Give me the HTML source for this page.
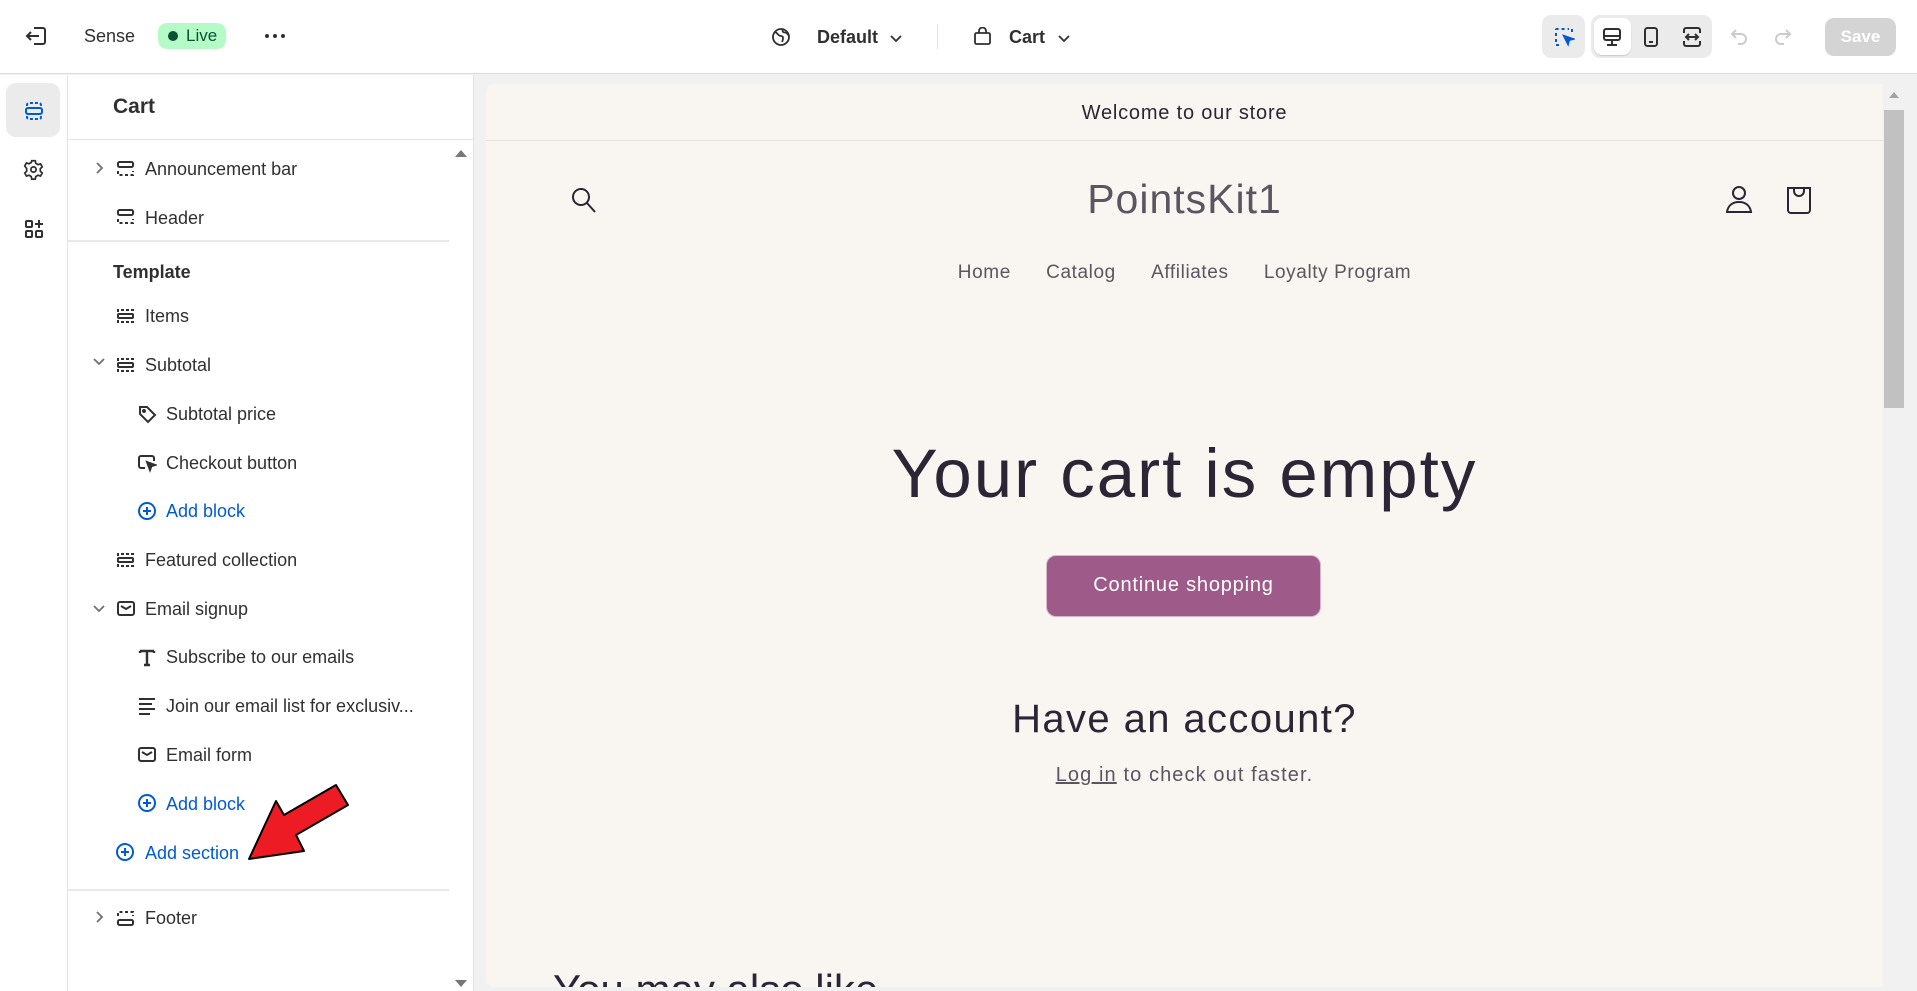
<!DOCTYPE html>
<html><head><meta charset="utf-8"><style>
*{box-sizing:border-box;margin:0;padding:0}
body{width:1917px;height:991px;overflow:hidden;background:#f1f1f1;font-family:"Liberation Sans",sans-serif;color:#303030;position:relative}
.abs{position:absolute}
.top{left:0;top:0;width:1917px;height:74px;background:#fff;border-bottom:1px solid #dcdcdc}
.rail{left:0;top:75px;width:68px;height:916px;background:#fff;border-right:1px solid #e3e3e3}
.side{left:68px;top:75px;width:406px;height:916px;background:#fff;border-right:1px solid #e3e3e3}
.row{position:absolute;font-size:18px;color:#303030;line-height:20px}
.blue{color:#005bd3}
svg{display:block}
.prev{left:486px;top:84px;width:1397px;height:903px;background:#f9f6f2;border-radius:8px 0 0 8px;overflow:hidden}
.sb{left:1883px;top:84px;width:22px;height:907px;background:#f1f1f1}
.pt{font-family:"Liberation Sans",sans-serif;color:#2b2535;position:absolute;text-align:center;white-space:nowrap}
</style></head><body>
<div class="abs top">
 <svg class="abs" style="left:25px;top:26px" width="22" height="20" viewBox="0 0 22 20" fill="none" stroke="#303030" stroke-width="2"><path d="M9 2h9a2 2 0 0 1 2 2v12a2 2 0 0 1-2 2H9"/><path d="M14 10H2M6 6l-4 4 4 4"/></svg>
 <div class="abs" style="left:84px;top:26px;font-size:18px">Sense</div>
 <div class="abs" style="left:158px;top:23px;width:68px;height:26px;border-radius:9px;background:#b4fbc8;font-size:17px;color:#0c5132;padding-left:28px;line-height:26px">Live<span class="abs" style="left:10px;top:8px;width:10px;height:10px;border-radius:5px;background:#0c5132"></span></div>
 <div class="abs" style="left:265px;top:34px;width:20px;height:4px">
  <span class="abs" style="left:0;width:4px;height:4px;border-radius:2px;background:#303030"></span><span class="abs" style="left:8px;width:4px;height:4px;border-radius:2px;background:#303030"></span><span class="abs" style="left:16px;width:4px;height:4px;border-radius:2px;background:#303030"></span></div>
 <svg class="abs" style="left:771px;top:27px" width="20" height="20" viewBox="0 0 20 20" fill="none" stroke="#303030" stroke-width="1.8"><circle cx="10" cy="10" r="8"/><path d="M4 5c3 1 3 4 6 4s2 4 1 6M12 2.5c-1 2 0 3 2 3s3 2 3 3"/></svg>
 <div class="abs" style="left:817px;top:27px;font-size:18px;font-weight:bold">Default</div>
 <svg class="abs" style="left:889px;top:34px" width="14" height="9" viewBox="0 0 14 9" fill="none" stroke="#303030" stroke-width="1.8"><path d="M2 2l5 5 5-5"/></svg>
 <div class="abs" style="left:937px;top:24px;width:1px;height:25px;background:#e3e3e3"></div>
 <svg class="abs" style="left:973px;top:27px" width="19" height="19" viewBox="0 0 19 19" fill="none" stroke="#303030" stroke-width="1.8"><rect x="2" y="6" width="15" height="11" rx="1.5"/><path d="M6 6V4a3.5 3.5 0 0 1 7 0v2"/></svg>
 <div class="abs" style="left:1009px;top:27px;font-size:18px;font-weight:bold">Cart</div>
 <svg class="abs" style="left:1057px;top:34px" width="14" height="9" viewBox="0 0 14 9" fill="none" stroke="#303030" stroke-width="1.8"><path d="M2 2l5 5 5-5"/></svg>
 <div class="abs" style="left:1542px;top:15px;width:43px;height:43px;border-radius:9px;background:#ebebeb"></div>
 <svg class="abs" style="left:1553px;top:26px" width="22" height="22" viewBox="0 0 22 22" fill="none" stroke="#005bd3" stroke-width="2" stroke-dasharray="3 3"><path d="M3 16V4a1 1 0 0 1 1-1h12"/><path d="M3 19h5"/><path d="M19 3v5"/><path d="M11 10l9 3-4 1-1 4z" fill="#005bd3" stroke-dasharray="none"/></svg>
 <div class="abs" style="left:1591px;top:15px;width:121px;height:43px;border-radius:9px;background:#ebebeb"></div>
 <div class="abs" style="left:1594px;top:18px;width:37px;height:37px;border-radius:8px;background:#fff;box-shadow:0 1px 1px rgba(0,0,0,.15)"></div>
 <svg class="abs" style="left:1601px;top:27px" width="22" height="20" viewBox="0 0 22 20" fill="none" stroke="#303030" stroke-width="2"><rect x="3" y="2" width="16" height="11" rx="2"/><path d="M3 9h16M11 13v4M6 18h10"/></svg>
 <svg class="abs" style="left:1643px;top:26px" width="16" height="22" viewBox="0 0 16 22" fill="none" stroke="#303030" stroke-width="2"><rect x="2" y="2" width="12" height="18" rx="2.5"/><path d="M6 16h4"/></svg>
 <svg class="abs" style="left:1681px;top:26px" width="22" height="22" viewBox="0 0 22 22" fill="none" stroke="#303030" stroke-width="2"><path d="M3 7V4a2 2 0 0 1 2-2h12a2 2 0 0 1 2 2v3M3 15v3a2 2 0 0 0 2 2h12a2 2 0 0 0 2-2v-3M5 11h12M8 8l-3 3 3 3M14 8l3 3-3 3"/></svg>
 <svg class="abs" style="left:1730px;top:27px" width="18" height="18" viewBox="0 0 18 18" fill="none" stroke="#cccccc" stroke-width="2"><path d="M6 3L2 7l4 4"/><path d="M2 7h9a5 5 0 0 1 0 10H8"/></svg>
 <svg class="abs" style="left:1774px;top:27px" width="18" height="18" viewBox="0 0 18 18" fill="none" stroke="#cccccc" stroke-width="2"><path d="M12 3l4 4-4 4"/><path d="M16 7H7a5 5 0 0 0 0 10h3"/></svg>
 <div class="abs" style="left:1825px;top:18px;width:71px;height:38px;border-radius:9px;background:#d4d4d4;color:#fff;font-weight:bold;font-size:17px;text-align:center;line-height:38px">Save</div>
</div>

<div class="abs rail">
 <div class="abs" style="left:6px;top:8px;width:54px;height:54px;border-radius:10px;background:#ebebeb"></div>
 <svg class="abs" style="left:24px;top:26px" width="20" height="20" viewBox="0 0 20 20" fill="none" stroke="#005bd3" stroke-width="2"><path d="M3 5V4a2 2 0 0 1 2-2h10a2 2 0 0 1 2 2v1M3 15v1a2 2 0 0 0 2 2h10a2 2 0 0 0 2-2v-1" stroke-dasharray="3 2"/><rect x="2" y="7" width="16" height="6" rx="2"/></svg>
 <svg class="abs" style="left:23px;top:84px" width="21" height="21" viewBox="0 0 24 24" fill="none" stroke="#303030" stroke-width="2"><circle cx="12" cy="12" r="3"/><path d="M10 2h4l.6 3 2.6 1.5 2.8-1 2 3.5-2.2 2v3l2.2 2-2 3.5-2.8-1-2.6 1.5-.6 3h-4l-.6-3-2.6-1.5-2.8 1-2-3.5 2.2-2v-3L2 8l2-3.5 2.8 1 2.6-1.5z"/></svg>
 <svg class="abs" style="left:24px;top:144px" width="20" height="20" viewBox="0 0 20 20" fill="none" stroke="#303030" stroke-width="2"><rect x="2" y="2" width="6" height="6" rx="1"/><rect x="2" y="12" width="6" height="6" rx="1"/><rect x="12" y="12" width="6" height="6" rx="1"/><path d="M15 1v8M11 5h8"/></svg>
</div>

<div class="abs side">
 <div class="row" style="left:45px;top:20px;font-size:21px;font-weight:bold;line-height:24px">Cart</div>
 <div class="abs" style="left:0;top:64px;width:406px;height:1px;background:#e3e3e3"></div>
 <div class="abs" style="left:387px;top:75px;width:0;height:0;border-left:6px solid transparent;border-right:6px solid transparent;border-bottom:7px solid #777"></div>
 <div class="abs" style="left:387px;top:905px;width:0;height:0;border-left:6px solid transparent;border-right:6px solid transparent;border-top:7px solid #777"></div>
 <div class="abs" style="left:0;top:165px;width:381px;height:2px;background:#e8e8e8"></div>
 <div class="abs" style="left:0;top:814px;width:381px;height:2px;background:#e8e8e8"></div>

 <svg class="abs" style="left:26px;top:86px" width="10" height="14" viewBox="0 0 10 14" fill="none" stroke="#707070" stroke-width="1.8"><path d="M3 2l5 5-5 5"/></svg>
 <svg class="abs" style="left:48px;top:85px" width="19" height="18" viewBox="0 0 19 18" fill="none" stroke="#303030" stroke-width="2"><rect x="2" y="2" width="15" height="5" rx="1.5"/><path d="M2 11v4h15v-4" stroke-dasharray="3 2.5"/></svg>
 <div class="row" style="left:77px;top:84px">Announcement bar</div>
 <svg class="abs" style="left:48px;top:133px" width="19" height="18" viewBox="0 0 19 18" fill="none" stroke="#303030" stroke-width="2"><rect x="2" y="2" width="15" height="5" rx="1.5"/><path d="M2 11v4h15v-4" stroke-dasharray="3 2.5"/></svg>
 <div class="row" style="left:77px;top:133px">Header</div>

 <div class="row" style="left:45px;top:187px;font-weight:bold">Template</div>
 <svg class="abs" style="left:48px;top:232px" width="19" height="18" viewBox="0 0 19 18" fill="none" stroke="#303030" stroke-width="2"><path d="M2 5V3h15v2M2 13v2h15v-2" stroke-dasharray="3 2"/><rect x="2" y="7" width="15" height="4" rx="1"/></svg>
 <div class="row" style="left:77px;top:231px">Items</div>
 <svg class="abs" style="left:24px;top:282px" width="14" height="10" viewBox="0 0 14 10" fill="none" stroke="#707070" stroke-width="1.8"><path d="M2 2l5 5 5-5"/></svg>
 <svg class="abs" style="left:48px;top:281px" width="19" height="18" viewBox="0 0 19 18" fill="none" stroke="#303030" stroke-width="2"><path d="M2 5V3h15v2M2 13v2h15v-2" stroke-dasharray="3 2"/><rect x="2" y="7" width="15" height="4" rx="1"/></svg>
 <div class="row" style="left:77px;top:280px">Subtotal</div>
 <svg class="abs" style="left:69px;top:329px" width="20" height="20" viewBox="0 0 20 20" fill="none" stroke="#303030" stroke-width="2"><path d="M3 10V3h7l8 8-7 7z"/><circle cx="7" cy="7" r="1"/></svg>
 <div class="row" style="left:98px;top:329px">Subtotal price</div>
 <svg class="abs" style="left:69px;top:378px" width="20" height="20" viewBox="0 0 20 20" fill="none" stroke="#303030" stroke-width="2"><path d="M8 15H4a2 2 0 0 1-2-2V5a2 2 0 0 1 2-2h11a2 2 0 0 1 2 2v3"/><path d="M10 9l8 3-3.5 1-1.5 4z" fill="#303030"/></svg>
 <div class="row" style="left:98px;top:378px">Checkout button</div>
 <svg class="abs" style="left:69px;top:426px" width="20" height="20" viewBox="0 0 20 20" fill="none" stroke="#005bd3" stroke-width="2"><circle cx="10" cy="10" r="8"/><path d="M10 6v8M6 10h8"/></svg>
 <div class="row blue" style="left:98px;top:426px">Add block</div>
 <svg class="abs" style="left:48px;top:476px" width="19" height="18" viewBox="0 0 19 18" fill="none" stroke="#303030" stroke-width="2"><path d="M2 5V3h15v2M2 13v2h15v-2" stroke-dasharray="3 2"/><rect x="2" y="7" width="15" height="4" rx="1"/></svg>
 <div class="row" style="left:77px;top:475px">Featured collection</div>
 <svg class="abs" style="left:24px;top:529px" width="14" height="10" viewBox="0 0 14 10" fill="none" stroke="#707070" stroke-width="1.8"><path d="M2 2l5 5 5-5"/></svg>
 <svg class="abs" style="left:48px;top:525px" width="20" height="17" viewBox="0 0 20 17" fill="none" stroke="#303030" stroke-width="2"><rect x="2" y="2" width="16" height="13" rx="2"/><path d="M5 6l5 3 5-3"/></svg>
 <div class="row" style="left:77px;top:524px">Email signup</div>
 <svg class="abs" style="left:69px;top:572px" width="20" height="20" viewBox="0 0 20 20" fill="none" stroke="#303030" stroke-width="2.4"><path d="M3 4h14M10 4v14M3 4v2M17 4v2M7 18h6"/></svg>
 <div class="row" style="left:98px;top:572px">Subscribe to our emails</div>
 <svg class="abs" style="left:69px;top:621px" width="20" height="20" viewBox="0 0 20 20" fill="none" stroke="#303030" stroke-width="2"><path d="M2 3h16M2 8h13M2 13h16M2 18h11"/></svg>
 <div class="row" style="left:98px;top:621px">Join our email list for exclusiv...</div>
 <svg class="abs" style="left:69px;top:671px" width="20" height="17" viewBox="0 0 20 17" fill="none" stroke="#303030" stroke-width="2"><rect x="2" y="2" width="16" height="13" rx="2"/><path d="M5 6l5 3 5-3"/></svg>
 <div class="row" style="left:98px;top:670px">Email form</div>
 <svg class="abs" style="left:69px;top:718px" width="20" height="20" viewBox="0 0 20 20" fill="none" stroke="#005bd3" stroke-width="2"><circle cx="10" cy="10" r="8"/><path d="M10 6v8M6 10h8"/></svg>
 <div class="row blue" style="left:98px;top:719px">Add block</div>
 <svg class="abs" style="left:47px;top:767px" width="20" height="20" viewBox="0 0 20 20" fill="none" stroke="#005bd3" stroke-width="2"><circle cx="10" cy="10" r="8"/><path d="M10 6v8M6 10h8"/></svg>
 <div class="row blue" style="left:77px;top:768px">Add section</div>
 <svg class="abs" style="left:178px;top:706px" width="110" height="82" viewBox="0 0 110 82"><path d="M3 78L30 20 38 34 90 4 102 24 50 54 58 70z" fill="#ed1c24" stroke="#000" stroke-width="2" stroke-linejoin="round"/></svg>
 <svg class="abs" style="left:26px;top:835px" width="10" height="14" viewBox="0 0 10 14" fill="none" stroke="#707070" stroke-width="1.8"><path d="M3 2l5 5-5 5"/></svg>
 <svg class="abs" style="left:48px;top:834px" width="19" height="18" viewBox="0 0 19 18" fill="none" stroke="#303030" stroke-width="2"><path d="M2 7V3h15v4" stroke-dasharray="3 2.5"/><rect x="2" y="11" width="15" height="5" rx="1.5"/></svg>
 <div class="row" style="left:77px;top:833px">Footer</div>
</div>

<div class="abs prev">
 <div class="pt" style="left:0;width:1397px;top:18px;font-size:20px;letter-spacing:.8px">Welcome to our store</div>
 <div class="abs" style="left:0;top:56px;width:1397px;height:1px;background:#e6e3df"></div>
 <svg class="abs" style="left:84px;top:102px" width="28" height="30" viewBox="0 0 28 30" fill="none" stroke="#2b2535" stroke-width="2"><circle cx="11" cy="11" r="8"/><path d="M17 17l8 9"/></svg>
 <div class="pt" style="left:0;width:1397px;top:92px;font-size:41px;color:#5a5560;letter-spacing:1px">PointsKit1</div>
 <svg class="abs" style="left:1238px;top:100px" width="30" height="32" viewBox="0 0 30 32" fill="none" stroke="#2b2535" stroke-width="2"><circle cx="15" cy="9" r="6"/><path d="M3 28c1-7 6-10 12-10s11 3 12 10z"/></svg>
 <svg class="abs" style="left:1299px;top:100px" width="28" height="32" viewBox="0 0 28 32" fill="none" stroke="#2b2535" stroke-width="2"><path d="M3 4h22v22a3 3 0 0 1-3 3H6a3 3 0 0 1-3-3z"/><path d="M9 4v3a5 5 0 0 0 10 0V4"/></svg>
 <div class="pt" style="left:0;width:1397px;top:178px;font-size:19px;color:#5a5560;letter-spacing:.6px">Home&nbsp;&nbsp;&nbsp;&nbsp;&nbsp;&nbsp;Catalog&nbsp;&nbsp;&nbsp;&nbsp;&nbsp;&nbsp;Affiliates&nbsp;&nbsp;&nbsp;&nbsp;&nbsp;&nbsp;Loyalty Program</div>
 <div class="pt" style="left:0;width:1397px;top:350px;font-size:69px;letter-spacing:2px">Your cart is empty</div>
 <div class="abs" style="left:560px;top:471px;width:275px;height:62px;border-radius:10px;background:#9e5a88;border:1.5px solid #d9b7cc;color:#fff;font-size:20px;text-align:center;line-height:58px;letter-spacing:.8px">Continue shopping</div>
 <div class="pt" style="left:0;width:1397px;top:613px;font-size:40px;letter-spacing:1.4px">Have an account?</div>
 <div class="pt" style="left:0;width:1397px;top:680px;font-size:20px;color:#5a5560;letter-spacing:1.1px"><span style="text-decoration:underline">Log in</span> to check out faster.</div>
 <div class="pt" style="left:67px;top:882px;font-size:42px;text-align:left">You may also like</div>
</div>
<div class="abs sb">
 <div class="abs" style="left:6px;top:8px;width:0;height:0;border-left:5px solid transparent;border-right:5px solid transparent;border-bottom:6px solid #a3a3a3"></div>
 <div class="abs" style="left:1px;top:26px;width:20px;height:298px;background:#c1c1c1"></div>
</div>
</body></html>
